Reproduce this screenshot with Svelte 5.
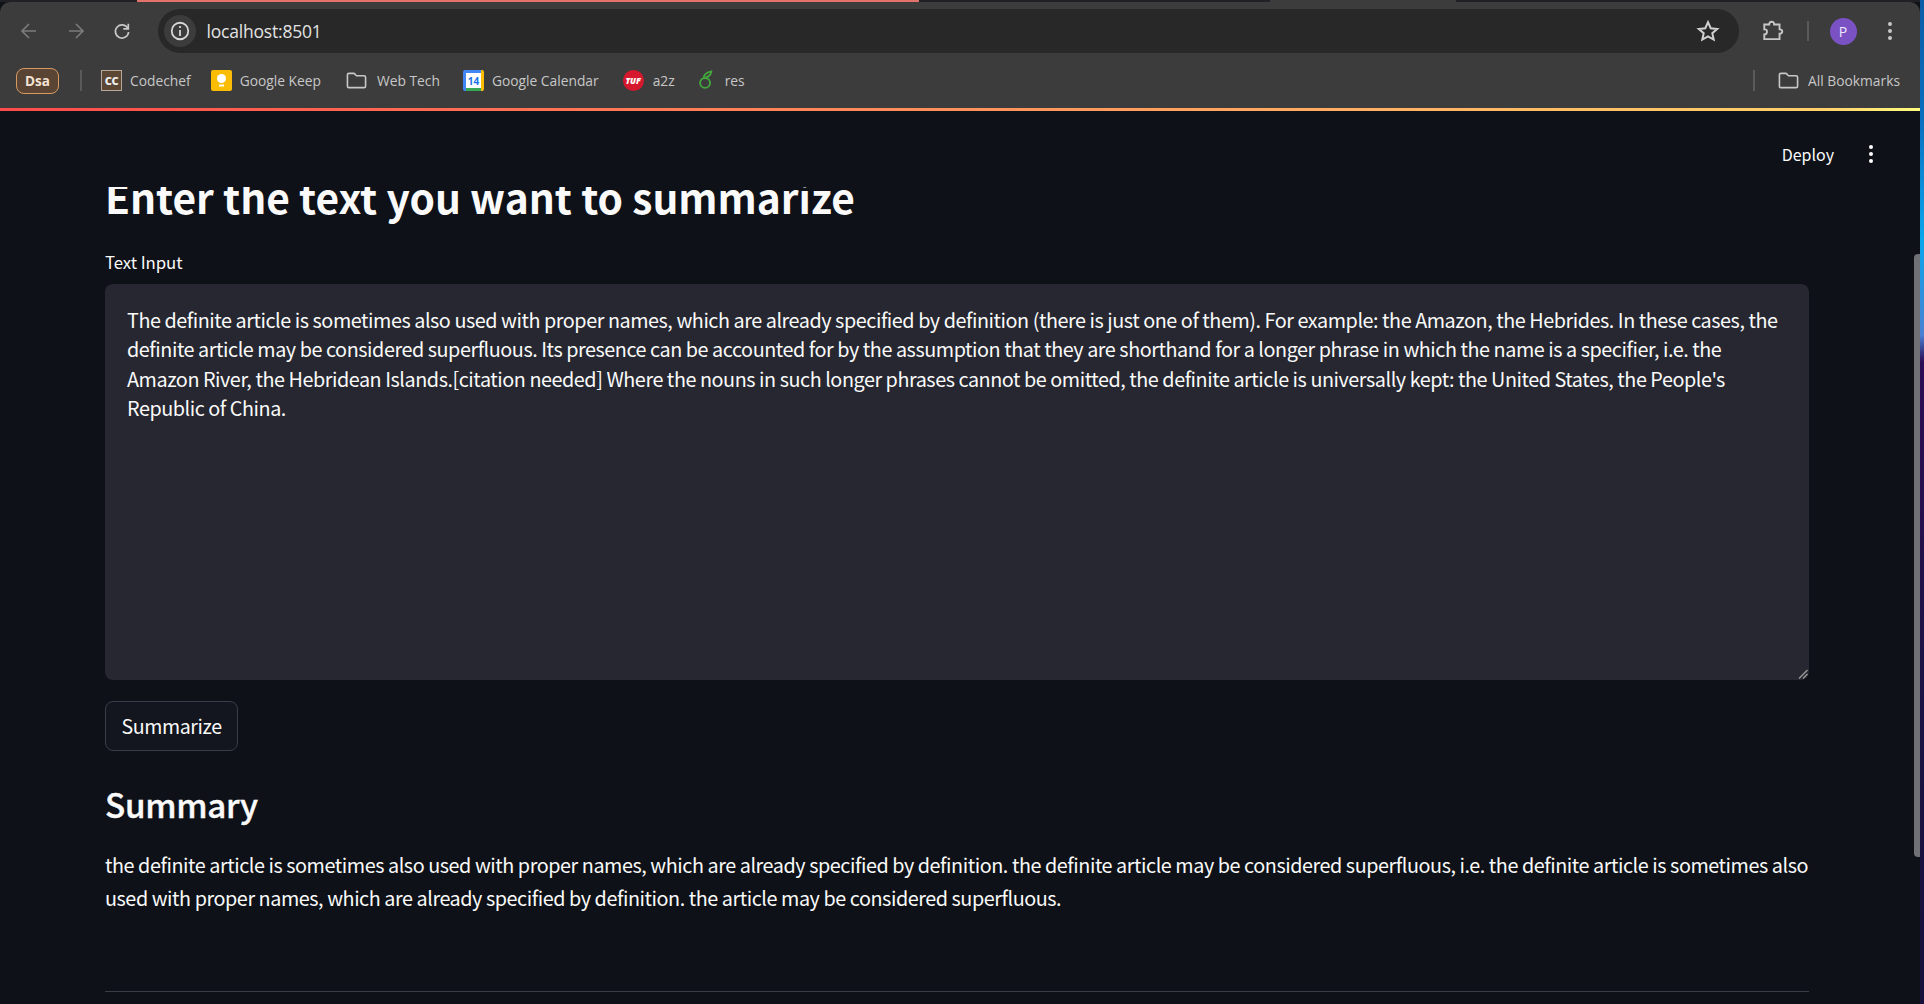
<script>
  const bookmarks = [
    { label: 'Codechef', icon: 'cc' },
    { label: 'Google Keep', icon: 'keep' },
    { label: 'Web Tech', icon: 'folder' },
    { label: 'Google Calendar', icon: 'cal' },
    { label: 'a2z', icon: 'tuf' },
    { label: 'res', icon: 'leaf' }
  ];
</script>

{#snippet folder()}
  <svg class="ic" viewBox="0 0 22 22" fill="none" stroke="#c7c7c7" stroke-width="1.7"><path d="M1.5 5q0-1.5 1.5-1.5h5.500l2.500 2.500h8q1.500 0 1.500 1.500v9.500q0 1.500-1.500 1.500H3q-1.500 0-1.500-1.500z"/></svg>
{/snippet}

<div class="screen">
  <div class="main">
    <div class="tabstrip"><div class="tabline"></div><div class="tabbump"></div></div>
    <div class="chrome">
      <div class="toolbar">
        <svg class="nav" viewBox="0 0 20 20" fill="none" stroke="#7b7b7b" stroke-width="1.7"><path d="M17 10H3.500M10 3l-7 7 7 7"/></svg>
        <svg class="nav" viewBox="0 0 20 20" fill="none" stroke="#7b7b7b" stroke-width="1.7"><path d="M3 10h13.500M10 3l7 7-7 7"/></svg>
        <svg class="nav" viewBox="0 0 20 20" fill="none" stroke="#c7c7c7" stroke-width="1.7"><path d="M15.800 7.200A6.600 6.600 0 1 0 16.600 11"/><path d="M16.300 2.800v5h-5" /></svg>
        <div class="omnibox">
          <div class="info"><svg viewBox="0 0 20 20" fill="none" stroke="#d8d8d8" stroke-width="1.600"><circle cx="10" cy="10" r="7.500"/><path d="M10 9v5.500M10 5.500v1.800"/></svg></div>
          <span class="url">localhost:8501</span>
          <svg class="star" viewBox="0 0 24 24" fill="none" stroke="#d0d0d0" stroke-width="2"><path d="M12 3.200l2.700 6 6.500.7-4.900 4.300 1.400 6.400-5.700-3.300-5.700 3.300 1.400-6.400L2.800 9.900l6.500-.7z"/></svg>
        </div>
        <svg class="ext" viewBox="0 0 22 22" fill="none" stroke="#c7c7c7" stroke-width="1.700"><path d="M3 5h4.500q0-2.500 2.300-2.500T12 5h5v4.500q2.500 0 2.500 2T17 13.500V18.500H3v-4.300q2.500 0 2.500-2.500T3 9.500z"/></svg>
        <div class="tsep"></div>
        <div class="avatar">P</div>
        <div class="dots light"><i></i><i></i><i></i></div>
      </div>
      <div class="bookmarks">
        <div class="group">Dsa</div>
        <div class="bsep first"></div>
        {#each bookmarks as b}
          <div class="bm {b.icon}-item">
            {#if b.icon === 'cc'}
              <div class="fav cc">CC</div>
            {:else if b.icon === 'keep'}
              <svg class="ic" viewBox="0 0 21 21"><rect width="21" height="21" rx="2" fill="#fbbc04"/><circle cx="10.500" cy="8.500" r="4.500" fill="#fff"/><rect x="8" y="14.500" width="5" height="2" fill="#fff"/></svg>
            {:else if b.icon === 'folder'}
              {@render folder()}
            {:else if b.icon === 'cal'}
              <div class="fav cal"><span>14</span></div>
            {:else if b.icon === 'tuf'}
              <div class="fav tuf">TUF</div>
            {:else}
              <svg class="ic" viewBox="0 0 22 22" fill="none" stroke="#43a83c" stroke-width="2"><circle cx="9.500" cy="13.500" r="5.200"/><path d="M8 8q1-5 8-6.500q-.5 5-6 6.500"/></svg>
            {/if}
            <span>{b.label}</span>
          </div>
        {/each}
        <div class="spacer"></div>
        <div class="bsep last"></div>
        <div class="bm all">{@render folder()}<span>All Bookmarks</span></div>
      </div>
    </div>
    <div class="gradline"></div>

    <div class="app">
      <div class="deploybar">
        <span class="deploy">Deploy</span>
        <div class="dots"><i></i><i></i><i></i></div>
      </div>
      <main class="content">
        <h1><span>Enter the text you want to summarize</span></h1>
        <label for="ta">Text Input</label>
        <div class="area" id="ta">
          The definite article is sometimes also used with proper names, which are already specified by definition (there is just one of them). For example: the Amazon, the Hebrides. In these cases, the definite article may be considered superfluous. Its presence can be accounted for by the assumption that they are shorthand for a longer phrase in which the name is a specifier, i.e. the Amazon River, the Hebridean Islands.[citation needed] Where the nouns in such longer phrases cannot be omitted, the definite article is universally kept: the United States, the People's Republic of China.
          <svg class="grip" viewBox="0 0 10 10" stroke="#9a9a9a" stroke-width="1.300"><path d="M1 9.500L9.500 1M5 9.500L9.500 5"/></svg>
        </div>
        <button>Summarize</button>
        <h2>Summary</h2>
        <p>the definite article is sometimes also used with proper names, which are already specified by definition. the definite article may be considered superfluous, i.e. the definite article is sometimes also used with proper names, which are already specified by definition. the article may be considered superfluous.</p>
        <hr />
      </main>
      <div class="thumb"></div>
    </div>
  </div>
  <div class="edge"></div>
</div>

<style>
  :global(body) { margin: 0; background: #0e1117; overflow: hidden; }
  .screen { width: 1924px; height: 1004px; display: flex; overflow: hidden; font-family: "Open Sans", "Noto Sans", sans-serif; }
  .main { width: 1920px; height: 100%; display: flex; flex-direction: column; flex: none; }
  .edge { width: 4px; flex: none; background: linear-gradient(#0b5ca6 0, #0a6fc0 120px, #0aa6ec 240px, #4a80d2 335px, #2c0c55 362px, #1d1245 650px, #16103a 100%); }
  .tabstrip { height: 2px; background: #202124; flex: none; position: relative; }
  .tabline { position: absolute; left: 137px; width: 782px; height: 2px; background: #e2736b; }
  .tabbump { position: absolute; left: 1270px; width: 186px; height: 2px; background: #3c3c3c; }
  .chrome { height: 106px; background: #3c3c3c; flex: none; border-radius: 10px 10px 0 0; }
  .toolbar { height: 44px; margin-top: 7px; display: flex; align-items: center; padding-left: 19px; }
  .nav { width: 20px; height: 20px; margin-right: 26.500px; flex: none; }
  .omnibox { width: 1581px; height: 44px; margin-left: -1px; border-radius: 22px; background: #282828; display: flex; align-items: center; padding-left: 6px; box-sizing: border-box; flex: none; }
  .info { width: 32px; height: 32px; border-radius: 50%; background: #3c3c3c; display: flex; align-items: center; justify-content: center; }
  .info svg { width: 22px; height: 22px; }
  .url { font-size: 17.500px; color: #e3e3e3; margin-left: 11px; letter-spacing: -0.200px; }
  .star { width: 24px; height: 24px; margin-left: auto; margin-right: 19px; }
  .ext { width: 24px; height: 24px; margin-left: 22px; flex: none; }
  .tsep { width: 2px; height: 20px; background: #5a5a5a; margin-left: 22px; flex: none; }
  .avatar { width: 27px; height: 27px; border-radius: 50%; background: #7b52c4; color: #f0e8ff; font-size: 14px; display: flex; align-items: center; justify-content: center; margin-left: 21px; flex: none; }
  .dots { display: flex; flex-direction: column; gap: 3px; flex: none; }
  .dots i { width: 4px; height: 4px; border-radius: 50%; background: #fff; display: block; }
  .dots.light { margin-left: 31px; }
  .dots.light i { background: #c7c7c7; }
  .bookmarks { height: 55px; display: flex; align-items: center; padding: 0 20px 0 16px; box-sizing: border-box; font-size: 13.800px; color: #c7c7c7; }
  .group { width: 43px; height: 26px; box-sizing: border-box; border: 1px solid #d79a62; border-radius: 8px; background: #5a4434; color: #f3e3d3; font-weight: 700; font-size: 13.500px; display: flex; align-items: center; justify-content: center; flex: none; }
  .bsep { width: 2px; height: 21px; background: #5a5a5a; flex: none; }
  .bsep.first { margin: 0 19px 0 21px; }
  .bsep.last { margin-right: 23px; }
  .bm { display: flex; align-items: center; gap: 8px; margin-right: 23px; flex: none; white-space: nowrap; }
  .cc-item { margin-right: 20px; }
  .keep-item { margin-right: 25px; }
  .folder-item { gap: 10px; margin-right: 23px; }
  .cal-item { margin-right: 24px; }
  .tuf-item { gap: 9px; margin-right: 21px; }
  .leaf-item { gap: 8px; }
  .bm.all { margin-right: 0; gap: 9px; }
  .spacer { flex: 1; }
  .ic { width: 21px; height: 21px; flex: none; display: block; }
  .fav { width: 21px; height: 21px; flex: none; box-sizing: border-box; display: flex; align-items: center; justify-content: center; }
  .cc { background: #5c4634; border: 1px solid #b8a898; color: #eee; font-weight: 800; font-size: 11px; letter-spacing: -0.500px; }
  .cal { background: linear-gradient(#4285f4 0 3px, transparent 3px), linear-gradient(#34a853, #34a853) bottom/100% 3px no-repeat, #fff; border-left: 3px solid #4285f4; border-right: 3px solid #fbbc04; border-radius: 2px; }
  .cal span { color: #1a73e8; font-weight: 700; font-size: 10px; }
  .tuf { background: #d6182e; border-radius: 50%; color: #fff; font-size: 8.500px; font-weight: 800; font-style: italic; }
  .gradline { height: 3px; flex: none; background: linear-gradient(90deg, #ff4b4b, #ffd16a 95%, #fffd80); }
  .app { flex: 1; min-height: 0; background: #0e1117; position: relative; }
  .deploybar { position: absolute; top: 31px; right: 47px; display: flex; align-items: center; gap: 35px; color: #fafafa; font: 400 16px "Noto Sans CJK SC", sans-serif; }
  .content { padding: 76px 0 0 105px; width: 1809px; color: #fafafa; font-family: "Noto Sans CJK SC", "Noto Sans", sans-serif; height: 100%; box-sizing: border-box; overflow: hidden; }
  h1 { margin: 0; font-size: 40.700px; font-weight: 700; line-height: 56px; height: 47px; overflow: hidden; }
  h1 span { display: block; margin-top: -18px; white-space: nowrap; }
  label { display: block; margin-top: 16px; font-size: 16.800px; line-height: 24px; letter-spacing: -0.050px; }
  .area { margin-top: 10px; height: 396px; box-sizing: border-box; padding: 21px 22px; background: #262730; border-radius: 8px; font-size: 19.800px; line-height: 29.400px; color: #fafafa; position: relative; letter-spacing: -0.450px; }
  .grip { position: absolute; right: 1px; bottom: 1px; width: 10px; height: 10px; }
  button { display: block; margin-top: 21px; height: 50px; width: 133px; background: #13161e; border: 1px solid #3a3d47; border-radius: 8px; color: #fafafa; font: 400 19.600px "Noto Sans CJK SC", sans-serif; letter-spacing: -0.400px; padding: 0 0 2px; }
  h2 { margin: 28px 0 0; font-size: 33.200px; font-weight: 500; line-height: 50px; letter-spacing: -0.300px; -webkit-text-stroke: 0.400px #fafafa; }
  p { margin: 19px 0 0; font-size: 19.800px; line-height: 33px; letter-spacing: -0.445px; }
  hr { border: none; height: 1px; background: #3a3d45; margin: 77px 0 0; }
  .thumb { position: absolute; right: 0; top: 143px; width: 6px; height: 603px; background: #6f7176; border-radius: 4px 0 0 4px; }
</style>
